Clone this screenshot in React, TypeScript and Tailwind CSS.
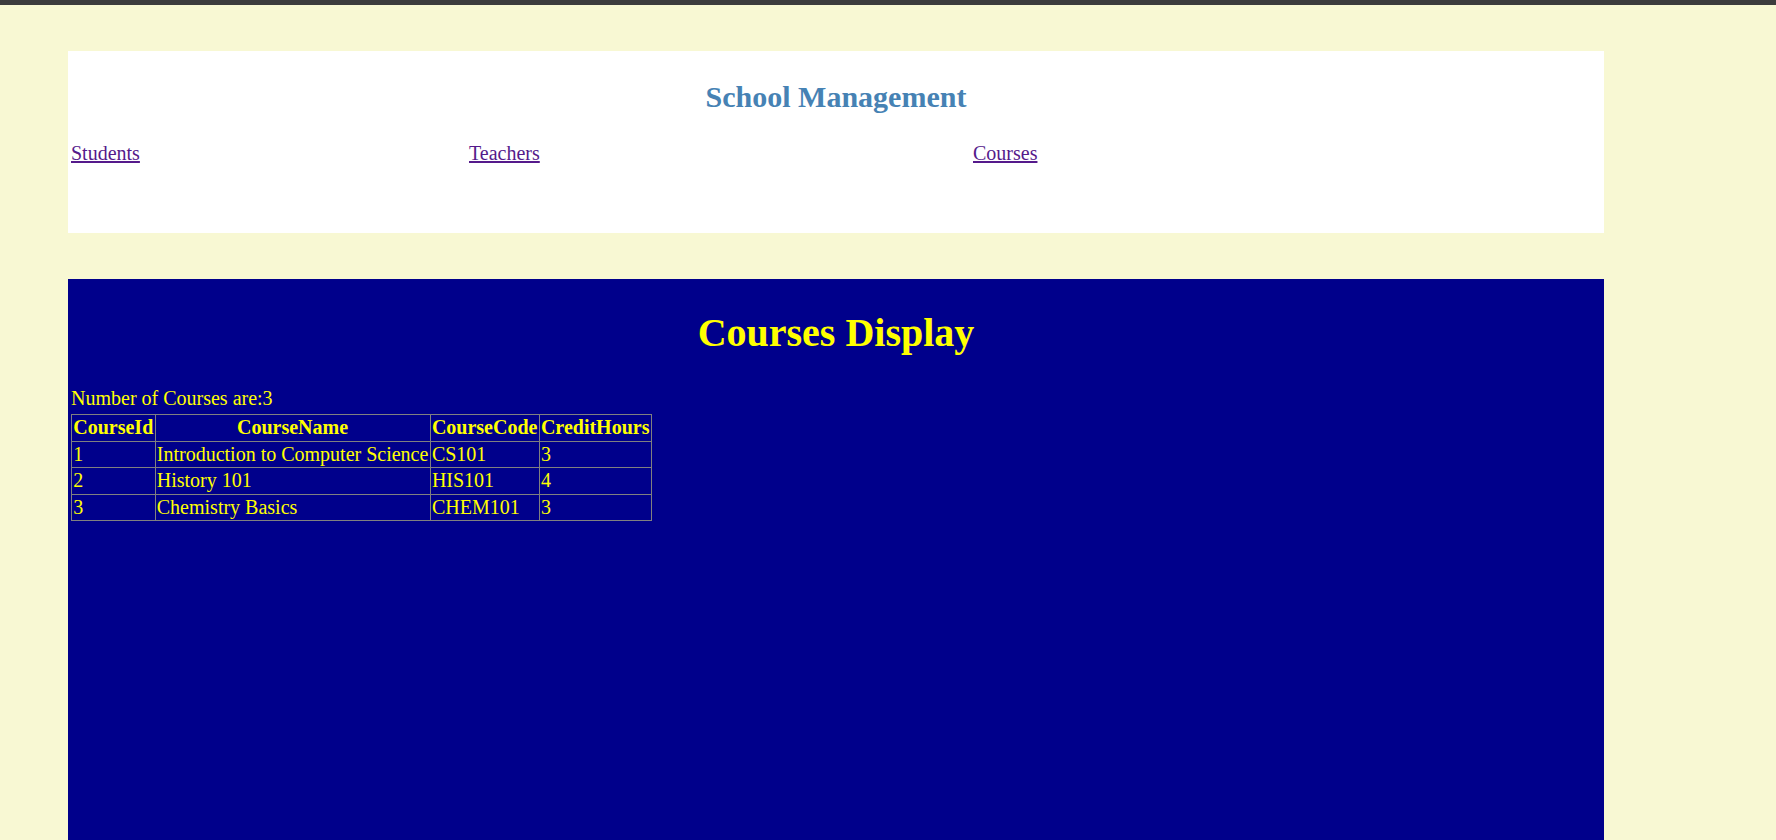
import React from 'react';

const courses = [
  { id: 1, name: 'Introduction to Computer Science', code: 'CS101', hours: 3 },
  { id: 2, name: 'History 101', code: 'HIS101', hours: 4 },
  { id: 3, name: 'Chemistry Basics', code: 'CHEM101', hours: 3 },
];

const App: React.FC = () => {
  return (
    <div className="min-h-screen bg-[#f8f8d3] font-['Liberation_Serif','Times_New_Roman',serif]">
      <div className="h-[5px] bg-[#3c3c3c]" />
      <div className="pl-[68px] pt-[46px]">
        {/* header */}
        <div className="w-[1536px] h-[182px] bg-white">
          <h2 className="pt-[28px] text-center text-[30px] leading-[35px] font-bold text-[#4682b4]">School Management</h2>
          <nav className="mt-[28px] flex pl-[3px] text-[20px] leading-[23px]">
            <a href="#" className="w-[398px] text-[#551a8b] underline">
              <span>Students</span>
            </a>
            <a href="#" className="w-[504px] text-[#551a8b] underline">
              <span>Teachers</span>
            </a>
            <a href="#" className="text-[#551a8b] underline">Courses</a>
          </nav>
        </div>

        {/* courses */}
        <div className="mt-[46px] w-[1536px] h-[561px] bg-[#00008b] text-[#ffff00]">
          <h1 className="pt-[31px] text-center text-[40px] leading-[46px] font-bold">Courses Display</h1>
          <p className="mt-[31px] pl-[3px] text-[20px] leading-[23px]">Number of Courses are:3</p>
          <table className="ml-[3px] mt-[4px] border-collapse text-[20px] leading-[23px]">
            <thead>
              <tr>
                <th className="border border-[#808080] px-[1.25px] py-[1.25px] font-bold">CourseId</th>
                <th className="border border-[#808080] px-[1.25px] py-[1.25px] font-bold">CourseName</th>
                <th className="border border-[#808080] px-[1.25px] py-[1.25px] font-bold">CourseCode</th>
                <th className="border border-[#808080] px-[1.25px] py-[1.25px] font-bold">CreditHours</th>
              </tr>
            </thead>
            <tbody>
              {courses.map((c) => (
                <tr key={c.id}>
                  <td className="border border-[#808080] px-[1.25px] py-[1.25px]">{c.id}</td>
                  <td className="border border-[#808080] px-[1.25px] py-[1.25px]">{c.name}</td>
                  <td className="border border-[#808080] px-[1.25px] py-[1.25px]">{c.code}</td>
                  <td className="border border-[#808080] px-[1.25px] py-[1.25px]">{c.hours}</td>
                </tr>
              ))}
            </tbody>
          </table>
        </div>
      </div>
    </div>
  );
};

export default App;
